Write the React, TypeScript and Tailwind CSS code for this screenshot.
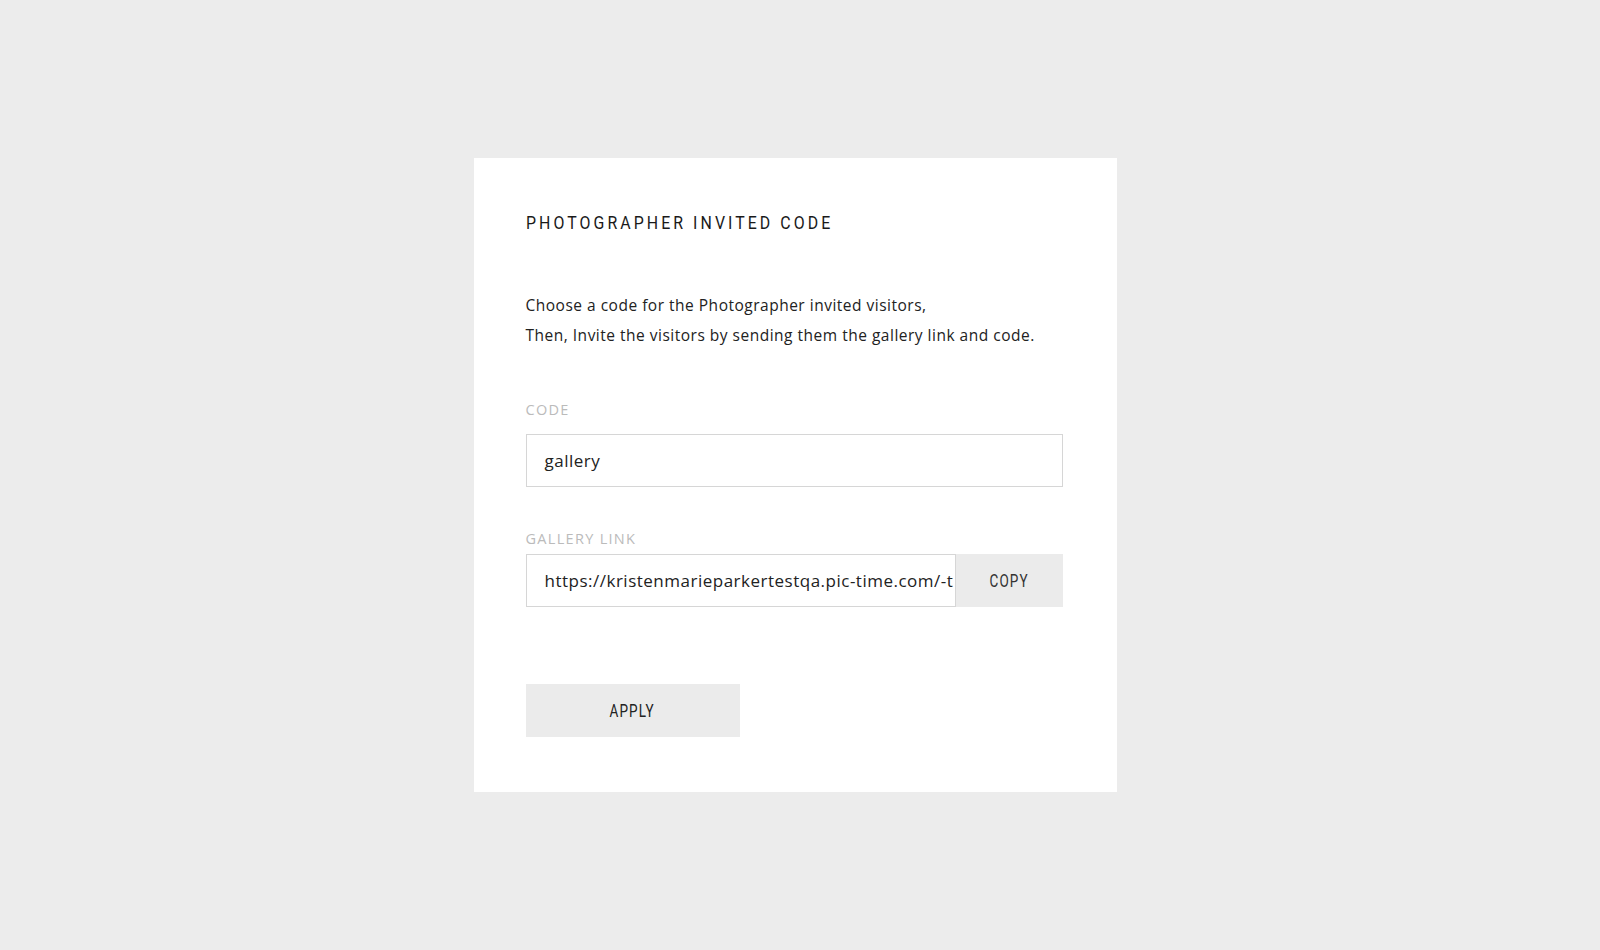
import React from "react"

const sans = "font-['Open_Sans','Lato',sans-serif]"
const cond = "font-['Roboto',sans-serif]"

export default function App() {
  return (
    <div className="min-h-screen bg-[#ececec] flex justify-center pt-[158px] pr-[10px]">
      <div className={`w-[643px] h-[634px] bg-white pl-[52px] pr-[54px] pt-[53px] text-[#222] ${sans}`}>
        <h1 className={`${cond} text-[18.7px] leading-[24px] text-[#1a1a1a]`}>
          <span className="inline-block origin-left scale-x-[0.85] tracking-[3.6px] whitespace-nowrap">
            PHOTOGRAPHER INVITED CODE
          </span>
        </h1>

        <p className="mt-[55px] text-[15.5px] leading-[30px] tracking-[0.5px] text-[#222]">
          Choose a code for the Photographer invited visitors,
          <br />
          Then, Invite the visitors by sending them the gallery link and code.
        </p>

        <label className="block mt-[50px] text-[14.5px] leading-[20px] tracking-[1.3px] text-[#bbbbbb]">CODE</label>
        <div className="mt-[14px] h-[53px] border border-[#d6d6d6] flex items-center px-[18px] text-[17px] tracking-[0.5px] text-[#222]">
          gallery
        </div>

        <label className="block mt-[42px] text-[14.5px] leading-[20px] tracking-[1.3px] text-[#bbbbbb]">GALLERY LINK</label>
        <div className="mt-[5px] h-[53px] flex">
          <div className="flex-1 min-w-0 border border-[#d6d6d6] flex items-center pl-[18px] overflow-hidden whitespace-nowrap text-[17px] tracking-[0.5px] text-[#222]">
            https://kristenmarieparkertestqa.pic-time.com/-t
          </div>
          <button className={`w-[107px] bg-[#ebebeb] ${cond} text-[18px] text-[#333]`}>
            <span className="inline-block scale-x-[0.75] tracking-[1.5px]">COPY</span>
          </button>
        </div>

        <button className={`mt-[77px] w-[214px] h-[53px] bg-[#ebebeb] ${cond} text-[18px] text-[#222]`}>
          <span className="inline-block scale-x-[0.75] tracking-[1.5px]">APPLY</span>
        </button>
      </div>
    </div>
  )
}
